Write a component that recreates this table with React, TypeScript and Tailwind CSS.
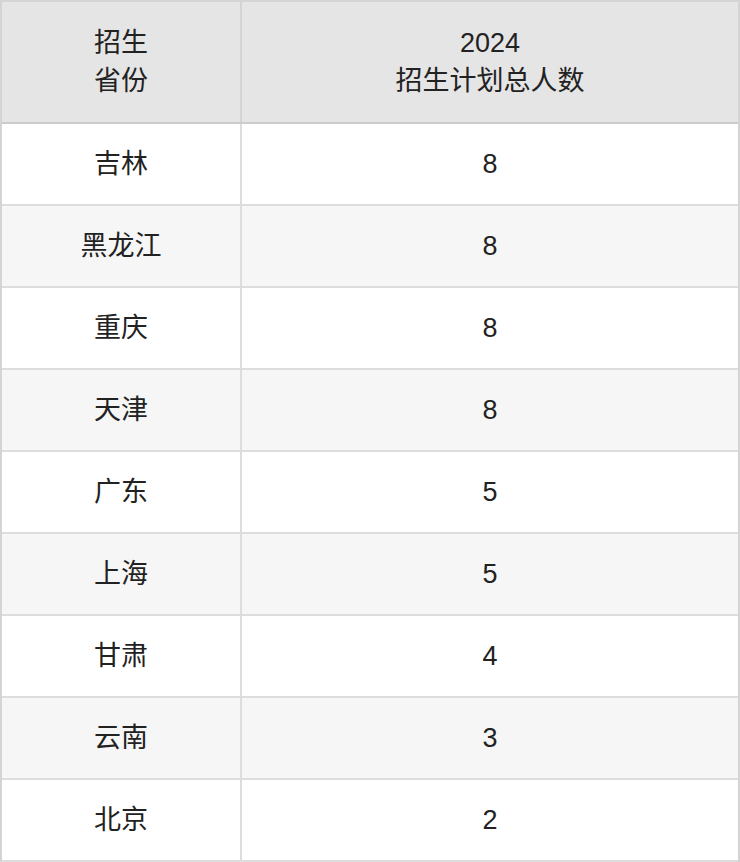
import React from "react";

const rows: [string, string][] = [
  ["吉林", "8"],
  ["黑龙江", "8"],
  ["重庆", "8"],
  ["天津", "8"],
  ["广东", "5"],
  ["上海", "5"],
  ["甘肃", "4"],
  ["云南", "3"],
  ["北京", "2"],
];

export default function App() {
  return (
    <div
      className="w-[740px] bg-white text-[#222] text-[27px]"
      style={{ fontFamily: '"Liberation Sans", "Noto Sans CJK SC", sans-serif' }}
    >
      <div className="border-2 border-[#d4d4d4] border-b-0">
        <div className="flex h-[122px] bg-[#e5e5e5] border-b-2 border-[#cccccc]">
          <div className="w-[240px] border-r-2 border-[#d4d4d4] flex flex-col items-center justify-center leading-[38px]">
            <span>招生</span>
            <span>省份</span>
          </div>
          <div className="flex-1 flex flex-col items-center justify-center leading-[38px]">
            <span>2024</span>
            <span>招生计划总人数</span>
          </div>
        </div>
        {rows.map(([p, n], i) => (
          <div
            key={p}
            className={`flex h-[82px] border-b-2 border-[#dddddd] ${i % 2 === 1 ? "bg-[#f6f6f6]" : "bg-white"}`}
          >
            <div className="w-[240px] border-r-2 border-[#dddddd] flex items-center justify-center">
              {p}
            </div>
            <div className="flex-1 flex items-center justify-center">{n}</div>
          </div>
        ))}
      </div>
    </div>
  );
}
